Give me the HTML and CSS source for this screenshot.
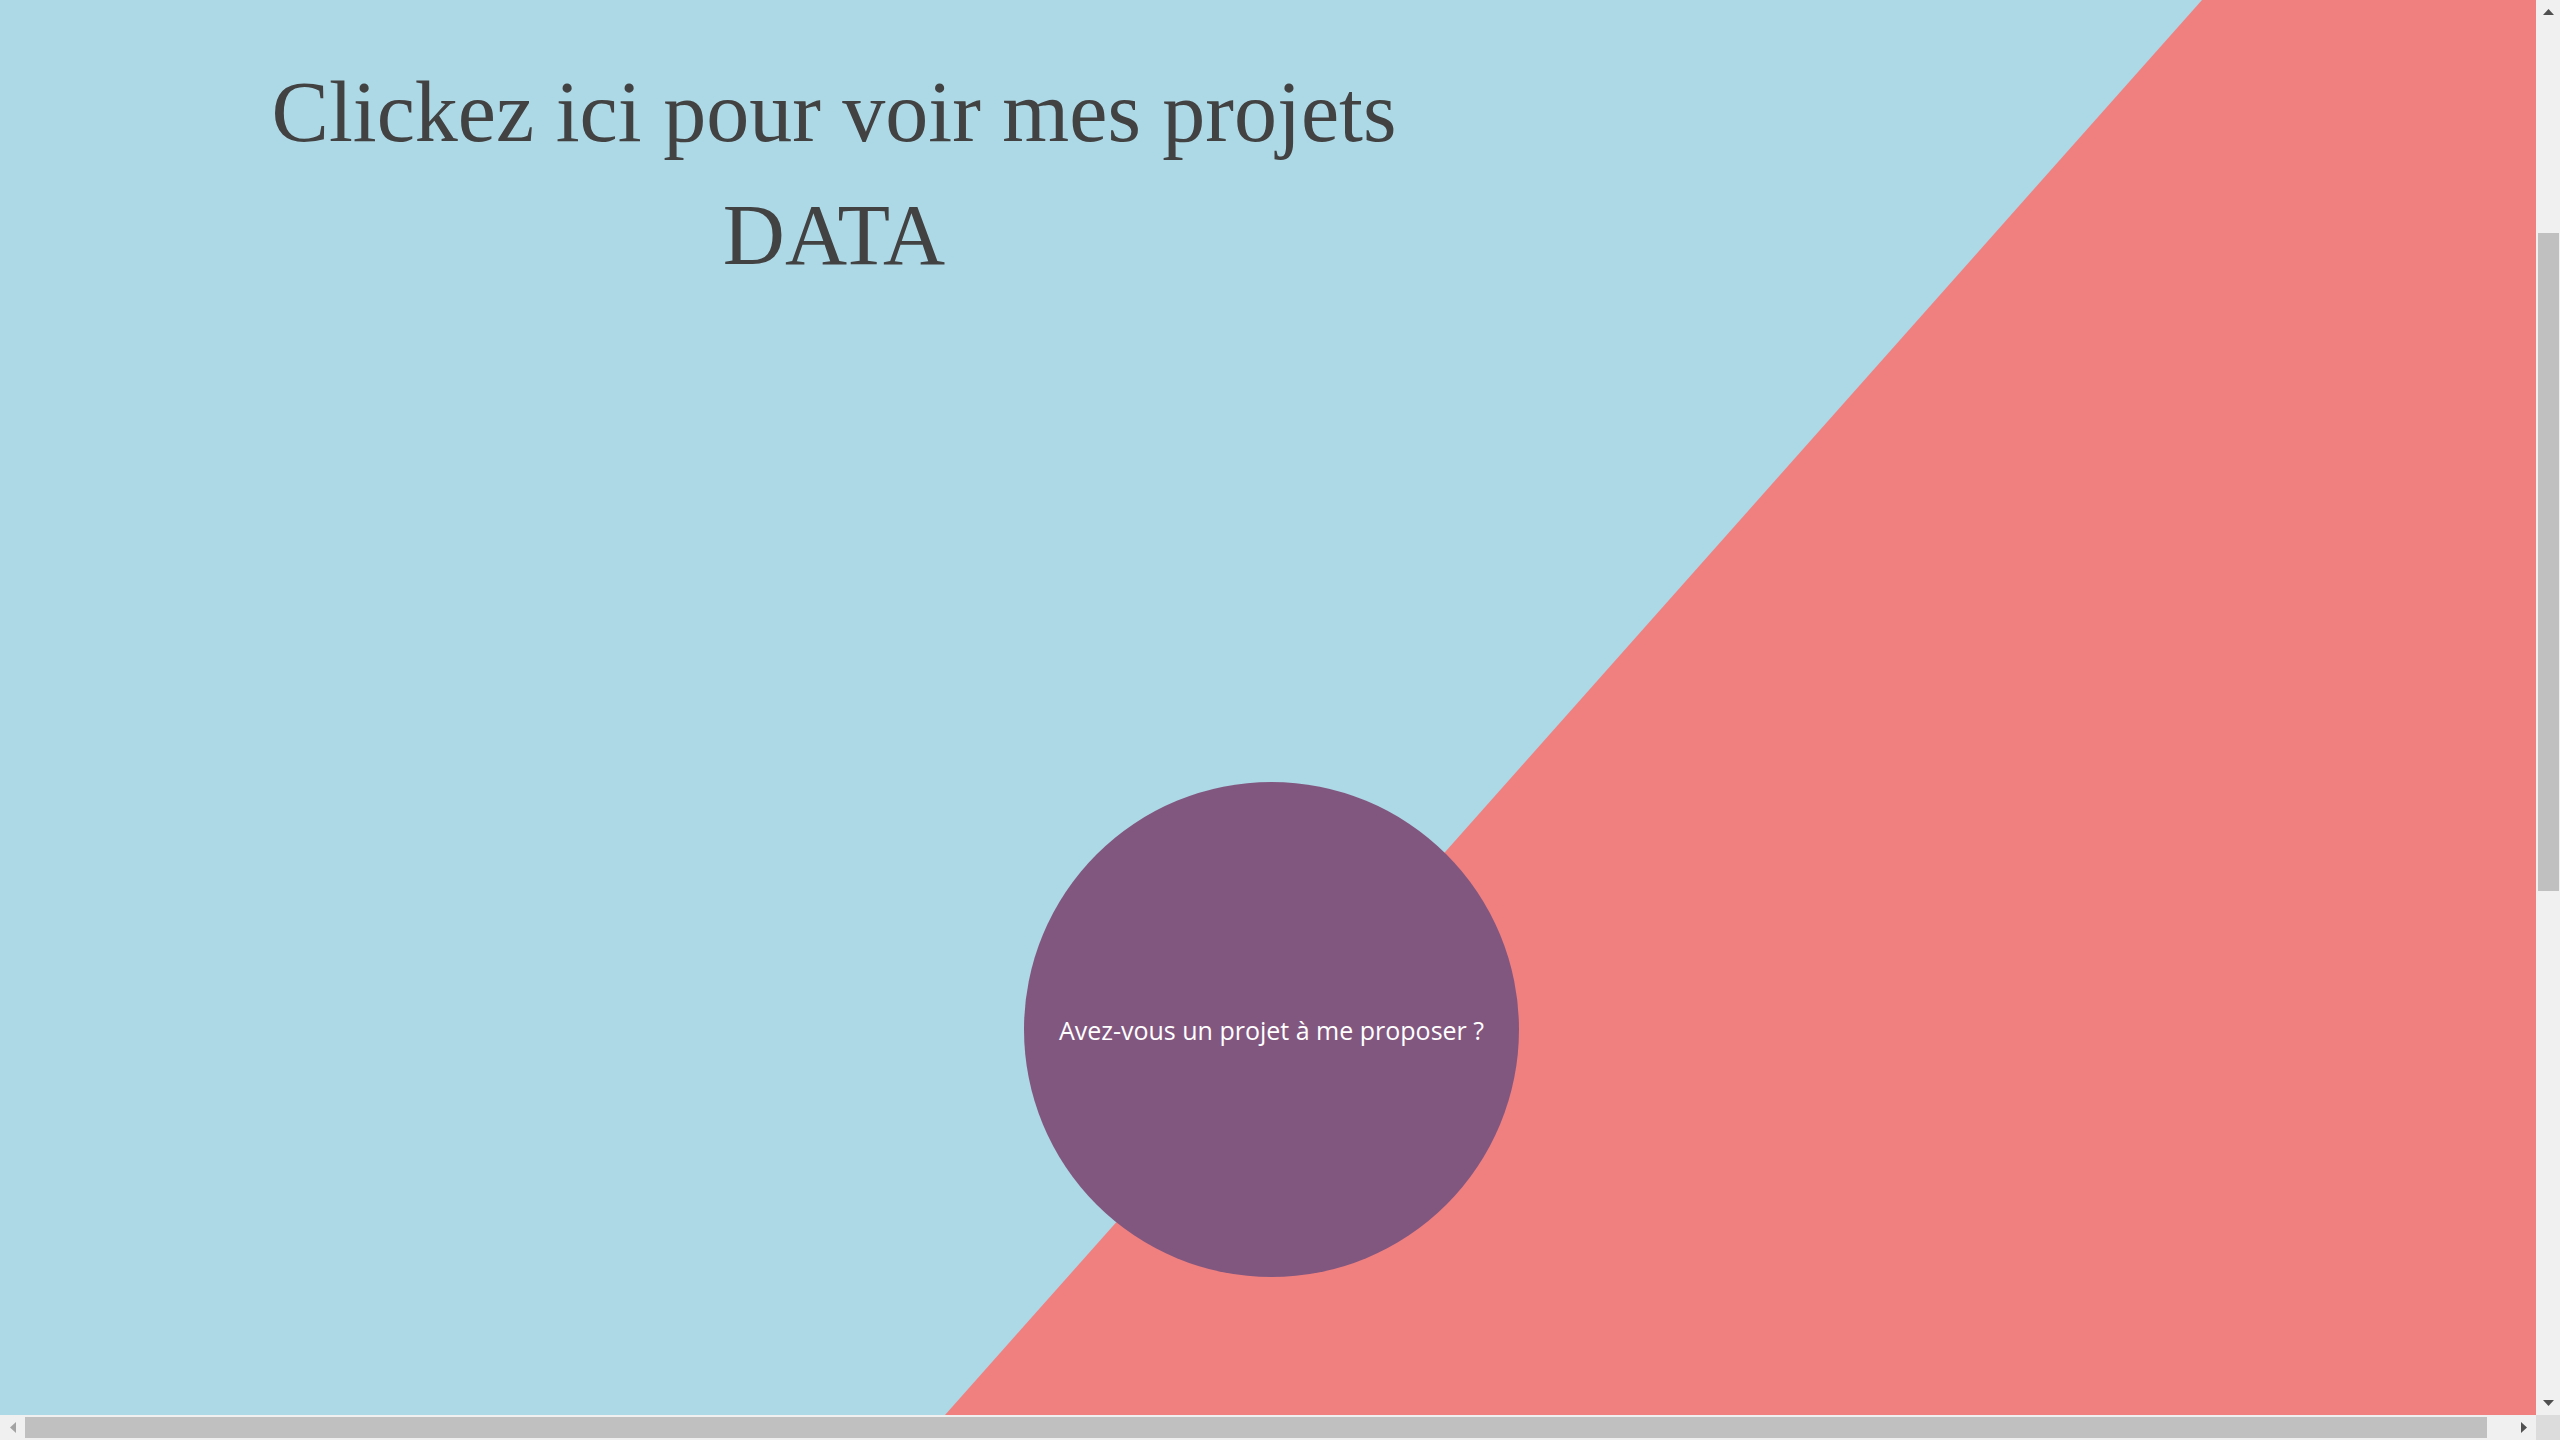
FILE: index.html
```html
<!DOCTYPE html>
<html lang="fr">
<head>
  <meta charset="UTF-8" />
  <meta name="viewport" content="width=device-width, initial-scale=1.0"/>
  <title>Portfolio</title>
  <link rel="stylesheet" href="styles.css">
</head>
<body>
  <div class="window">
    <main class="page">
      <h1 class="title">Clickez ici pour voir mes projets DATA</h1>

      <div class="bubble">
        <p>Avez-vous un projet à me proposer ?</p>
      </div>
    </main>

    <!-- fake scrollbars, the page was captured scrolled -->
    <div class="vbar">
      <div class="arrow-btn">
        <svg width="11" height="6" viewBox="0 0 11 6"><polygon points="5.5,0 11,6 0,6" fill="#505050"/></svg>
      </div>
      <div class="vtrack"><div class="vthumb"></div></div>
      <div class="arrow-btn">
        <svg width="11" height="6" viewBox="0 0 11 6"><polygon points="0,0 11,0 5.5,6" fill="#505050"/></svg>
      </div>
    </div>

    <div class="hbar">
      <div class="arrow-btn">
        <svg width="6" height="11" viewBox="0 0 6 11"><polygon points="6,0 6,11 0,5.5" fill="#a3a3a3"/></svg>
      </div>
      <div class="htrack"><div class="hthumb"></div></div>
      <div class="arrow-btn">
        <svg width="6" height="11" viewBox="0 0 6 11"><polygon points="0,0 6,5.5 0,11" fill="#505050"/></svg>
      </div>
    </div>

    <div class="corner"></div>
  </div>
</body>
</html>
```

FILE: styles.css
```css
body {
  margin: 0;
  overflow: hidden;
}

.window {
  display: grid;
  grid-template-columns: 2536px 24px;
  grid-template-rows: 1415px 25px;
  width: 2560px;
  height: 1440px;
}

.page {
  position: relative;
  overflow: hidden;
  background: #add8e6;
}

/* the coral diagonal */
.page::before {
  content: '';
  position: absolute;
  inset: 0;
  background: #f08080;
  clip-path: polygon(2202px 0, 100% 0, 100% 100%, 945px 100%);
}

.title {
  position: relative;
  width: 1240px;
  margin: 51px 0 0 214px;
  font-family: 'Liberation Serif', 'DejaVu Serif', serif;
  font-weight: normal;
  font-size: 86px;
  line-height: 123px;
  color: #424242;
  text-align: center;
}

.bubble {
  position: relative;
  width: 495px;
  height: 495px;
  margin: 485px 0 0 1024px;
  border-radius: 50%;
  background: #82577f;
  display: flex;
  align-items: center;
  justify-content: center;
}

.bubble p {
  margin: 0;
  font-family: 'Open Sans', 'Noto Sans', sans-serif;
  font-size: 25px;
  color: #ffffff;
}

/* scrollbars */
.vbar {
  display: flex;
  flex-direction: column;
  background: #f0f0f0;
}

.vbar .arrow-btn {
  height: 24px;
}

.vtrack {
  flex: 1;
  padding: 209px 1px 0 2px;
}

.vthumb {
  height: 658px;
  background: #c0c0c0;
}

.hbar {
  display: flex;
  background: #f0f0f0;
}

.hbar .arrow-btn {
  width: 25px;
}

.htrack {
  flex: 1;
  padding: 2px 24px 2px 0;
}

.hthumb {
  height: 21px;
  background: #c0c0c0;
}

.arrow-btn {
  display: flex;
  align-items: center;
  justify-content: center;
}

.corner {
  background: #dcdcdc;
}
```
